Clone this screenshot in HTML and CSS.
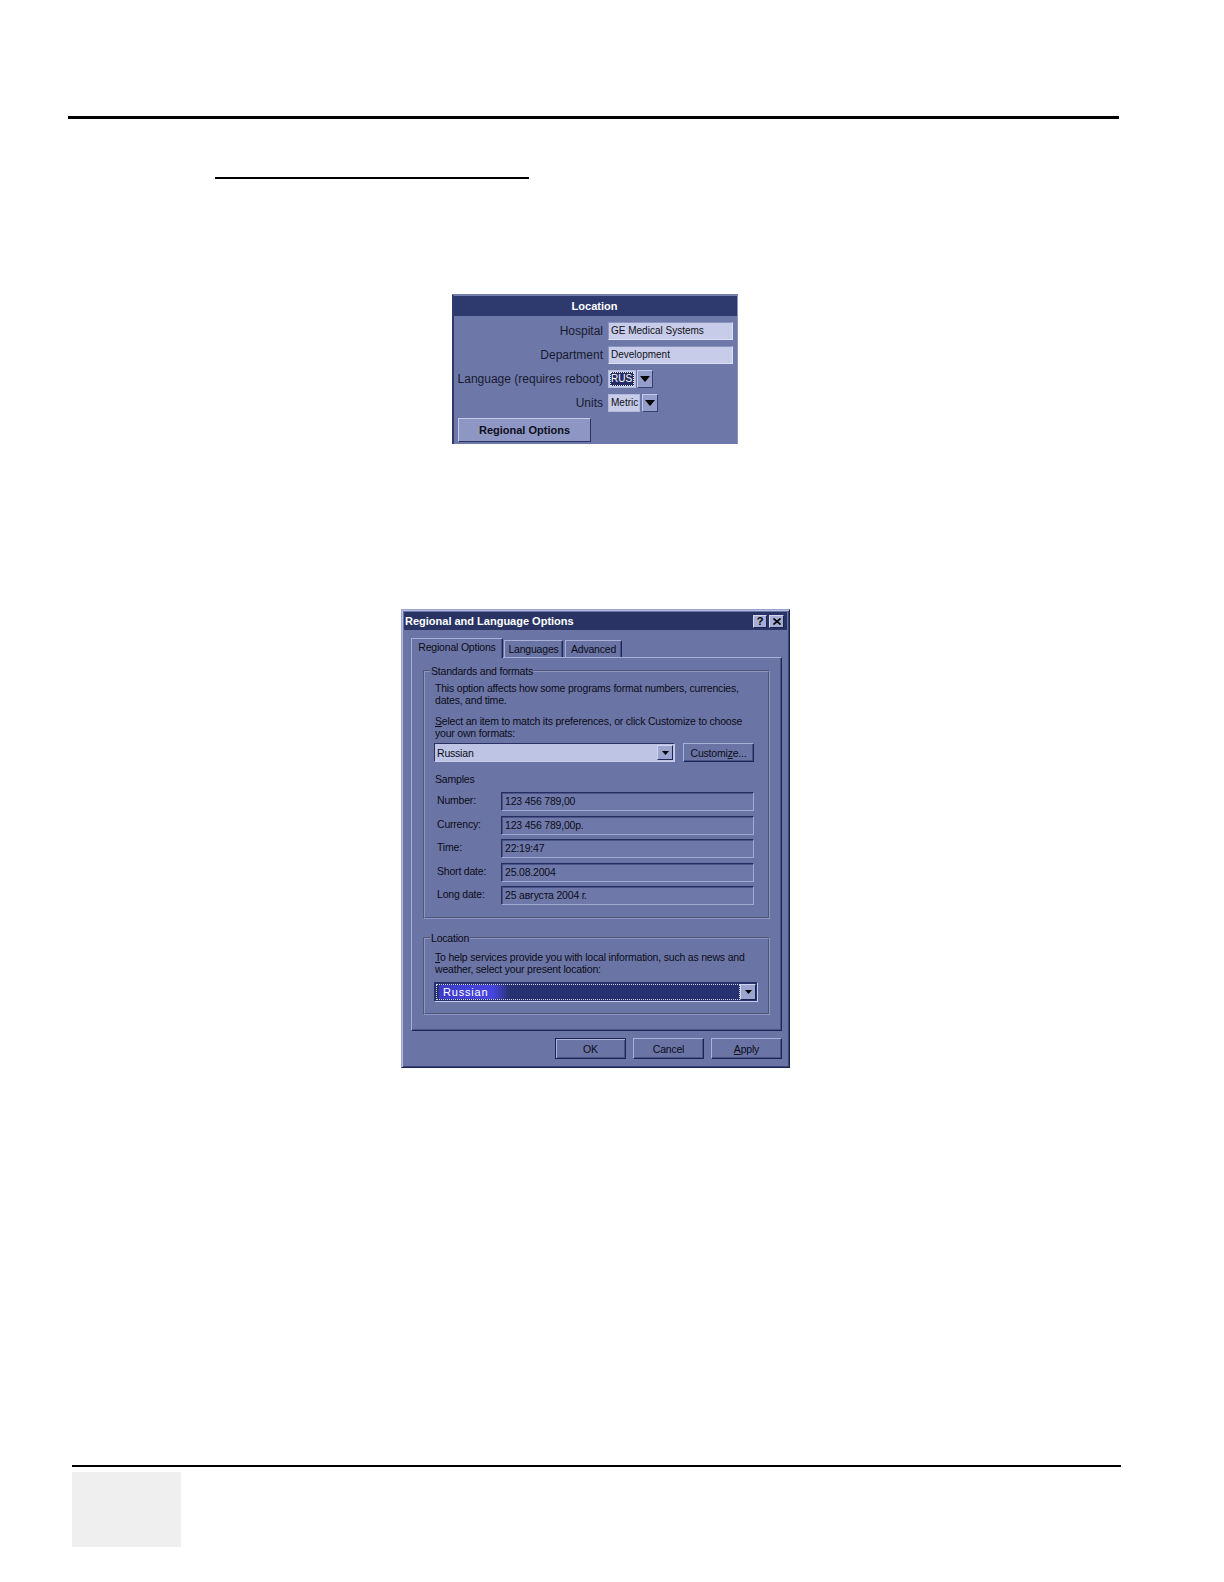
FILE: index.html
```html
<!DOCTYPE html>
<html>
<head>
<meta charset="utf-8">
<title>Regional and Language Options</title>
<link rel="stylesheet" href="styles.css">
</head>
<body>
<div class="page">
  <div class="rule-top"></div>
  <div class="rule-sub"></div>

  <div class="loc">
    <div class="loc-title">Location</div>
    <div class="loc-body">
      <span class="lbl">Hospital</span>
      <div class="field">GE Medical Systems</div>
      <span class="lbl">Department</span>
      <div class="field">Development</div>
      <span class="lbl">Language (requires reboot)</span>
      <div class="combo combo-rus">
        <div class="cbox cbox-rus"><span class="hl">RUS</span></div>
        <div class="arrow"><svg width="10" height="6" viewBox="0 0 10 6"><polygon points="0,0 10,0 5,6" fill="#000"/></svg></div>
      </div>
      <span class="lbl">Units</span>
      <div class="combo">
        <div class="cbox cbox-metric">Metric</div>
        <div class="arrow"><svg width="10" height="6" viewBox="0 0 10 6"><polygon points="0,0 10,0 5,6" fill="#000"/></svg></div>
      </div>
      <div class="btn-regional">Regional Options</div>
    </div>
  </div>

  <div class="dlg">
    <div class="dlg-title">
      <span class="dlg-title-text">Regional and Language Options</span>
      <div class="tb-btns">
        <span class="tb-btn tb-help">?</span>
        <span class="tb-btn tb-close"><svg width="8" height="7" viewBox="0 0 8 7"><path d="M0.5 0.5 L7.5 6.5 M7.5 0.5 L0.5 6.5" stroke="#000" stroke-width="1.6"/></svg></span>
      </div>
    </div>
    <div class="tabs">
      <div class="tab tab-active">Regional Options</div>
      <div class="tab tab-lang">Languages</div>
      <div class="tab tab-adv">Advanced</div>
    </div>
    <div class="tab-panel">
      <fieldset class="grp grp-std">
        <legend>Standards and formats</legend>
        <p class="txt txt-first">This option affects how some programs format numbers, currencies,<br>dates, and time.</p>
        <p class="txt txt-sel"><u>S</u>elect an item to match its preferences, or click Customize to choose<br>your own formats:</p>
        <div class="fmt-row">
          <div class="wcombo"><span class="wcombo-text">Russian</span><span class="warrow"><svg width="7" height="4" viewBox="0 0 7 4"><polygon points="0,0 7,0 3.5,4" fill="#000"/></svg></span></div>
          <div class="wbtn btn-cust">Customi<u>z</u>e...</div>
        </div>
        <p class="txt samples">Samples</p>
        <div class="samples-grid">
          <span class="s-lbl">Number:</span><div class="s-field">123 456 789,00</div>
          <span class="s-lbl">Currency:</span><div class="s-field">123 456 789,00р.</div>
          <span class="s-lbl">Time:</span><div class="s-field">22:19:47</div>
          <span class="s-lbl">Short date:</span><div class="s-field">25.08.2004</div>
          <span class="s-lbl">Long date:</span><div class="s-field">25 августа 2004 г.</div>
        </div>
      </fieldset>
      <fieldset class="grp grp-loc">
        <legend>Location</legend>
        <p class="txt txt-loc"><u>T</u>o help services provide you with local information, such as news and<br>weather, select your present location:</p>
        <div class="lcombo">
          <div class="lcombo-box"><span class="lcombo-text">Russian</span></div>
          <span class="warrow warrow-l"><svg width="7" height="4" viewBox="0 0 7 4"><polygon points="0,0 7,0 3.5,4" fill="#000"/></svg></span>
        </div>
      </fieldset>
    </div>
    <div class="dlg-btns">
      <div class="wbtn btn-default">OK</div>
      <div class="wbtn">Cancel</div>
      <div class="wbtn"><u>A</u>pply</div>
    </div>
  </div>

  <div class="rule-bottom"></div>
  <div class="foot-box"></div>
</div>
</body>
</html>
```
FILE: styles.css
```css
html, body {
  margin: 0;
  background: #ffffff;
}
body {
  font-family: "Liberation Sans", Arial, sans-serif;
  color: #0c0c18;
}
.page {
  padding-top: 116px;
  width: 1224px;
  min-height: 1582px;
  box-sizing: border-box;
}
.rule-top {
  margin-left: 68px;
  width: 1051px;
  height: 3px;
  background: #000;
}
.rule-sub {
  margin: 58px 0 0 215px;
  width: 314px;
  height: 2px;
  background: #000;
}

/* ---------- Location panel ---------- */
.loc {
  margin: 115px 0 0 452px;
  width: 286px;
  height: 150px;
  box-sizing: border-box;
  background: #6e78a8;
  border-top: 2px solid #7680b0;
  border-left: 2px solid #2e3a6e;
  border-right: 1px solid #8c94c4;
}
.loc-title {
  height: 20px;
  margin-left: -2px;
  background: #2e3a6e;
  color: #fff;
  font-weight: bold;
  font-size: 11px;
  line-height: 21px;
  text-align: center;
}
.loc-body {
  display: grid;
  grid-template-columns: 145px 125px;
  grid-template-rows: 18px 18px 18px 18px 24px;
  column-gap: 5px;
  row-gap: 6px;
  padding: 6px 0 0 4px;
}
.lbl {
  display: flex;
  justify-content: flex-end;
  font-size: 12px;
  line-height: 18px;
  color: #171a30;
  white-space: nowrap;
}
.field {
  box-sizing: border-box;
  background: #c7cce8;
  border: 1px solid;
  border-color: #8a92c0 #dde0f2 #dde0f2 #8a92c0;
  font-size: 10px;
  line-height: 16px;
  padding-left: 2px;
  color: #101018;
  white-space: nowrap;
}
.combo {
  display: flex;
  gap: 2px;
}
.combo-rus {
  gap: 1px;
}
.cbox {
  box-sizing: border-box;
  height: 18px;
  background: #c7cce8;
  border: 1px solid #b4bade;
  font-size: 10px;
  line-height: 16px;
  color: #101018;
}
.cbox-rus {
  width: 28px;
  padding: 1px;
}
.hl {
  display: block;
  height: 14px;
  background: #232c66;
  color: #fff;
  outline: 1px dotted #e4e6f4;
  outline-offset: -1px;
  line-height: 14px;
  padding-left: 1px;
  font-size: 10px;
  white-space: nowrap;
  overflow: hidden;
}
.cbox-metric {
  width: 32px;
  padding-left: 2px;
}
.arrow {
  width: 16px;
  height: 18px;
  box-sizing: border-box;
  background: #959dca;
  border: 1px solid;
  border-color: #c4c9e8 #39416f #39416f #c4c9e8;
  display: flex;
  align-items: center;
  justify-content: center;
}
.btn-regional {
  grid-column: 1 / 3;
  width: 133px;
  height: 24px;
  box-sizing: border-box;
  background: #8e96c3;
  border: 1px solid;
  border-color: #c6cbe8 #2a3264 #2a3264 #c6cbe8;
  font-weight: bold;
  font-size: 11px;
  color: #101020;
  display: flex;
  align-items: center;
  justify-content: center;
}

/* ---------- Windows dialog ---------- */
.dlg {
  margin: 165px 0 0 401px;
  width: 389px;
  height: 459px;
  box-sizing: border-box;
  background: #6b75a5;
  border: 1px solid;
  border-color: #9aa2d0 #1c2450 #1c2450 #9aa2d0;
  box-shadow: inset 1px 1px 0 #b8bee2, inset -1px -1px 0 #3a4478;
  padding: 2px;
  font-size: 10.5px;
  letter-spacing: -0.2px;
}
.dlg-title {
  height: 18px;
  background: #2a3464;
  display: flex;
  align-items: center;
  justify-content: space-between;
  padding: 0 3px 0 1px;
}
.dlg-title-text {
  color: #fff;
  font-weight: bold;
  font-size: 11px;
  letter-spacing: 0;
  white-space: nowrap;
}
.tb-btns {
  display: flex;
  gap: 2px;
}
.tb-btn {
  box-sizing: border-box;
  height: 13px;
  background: #a6aed6;
  border: 1px solid;
  border-color: #d4d8ee #1c2450 #1c2450 #d4d8ee;
  display: flex;
  align-items: center;
  justify-content: center;
  color: #000;
}
.tb-help {
  width: 14px;
  font-weight: bold;
  font-size: 11px;
  line-height: 11px;
}
.tb-close {
  width: 15px;
}
.tabs {
  display: flex;
  align-items: flex-end;
  height: 27px;
  padding-left: 7px;
  box-sizing: border-box;
}
.tab {
  height: 17px;
  box-sizing: border-box;
  border: 1px solid;
  border-bottom: none;
  border-color: #a8b0da #1e2654 transparent #a8b0da;
  box-shadow: inset -1px 0 0 #4a5488;
  display: flex;
  align-items: center;
  justify-content: center;
  white-space: nowrap;
  color: #0c0c18;
}
.tab-active {
  width: 92px;
  height: 20px;
  margin-bottom: -1px;
  position: relative;
  z-index: 1;
  background: #6b75a5;
  padding-bottom: 3px;
}
.tab-lang {
  width: 59px;
  margin-left: 1px;
}
.tab-adv {
  width: 57px;
  margin-left: 2px;
}
.tab-panel {
  margin-left: 7px;
  width: 371px;
  height: 374px;
  box-sizing: border-box;
  border: 1px solid;
  border-color: #a8b0da #1e2654 #1e2654 #a8b0da;
  box-shadow: inset -1px -1px 0 #4a5488;
  padding: 7px 0 0 11px;
}
.grp {
  margin: 0;
  width: 347px;
  box-sizing: border-box;
  border: 2px groove #8e96c6;
  padding: 0 0 11px 10px;
  min-inline-size: 0;
}
.grp-std {
  padding-bottom: 12px;
}
.grp legend {
  padding: 0 1px;
  margin-left: -5px;
  line-height: 12px;
  color: #0c0c18;
}
.txt {
  margin: 0;
  line-height: 12px;
  white-space: nowrap;
}
.txt-first {
  margin-top: 5px;
}
.txt-sel {
  margin-top: 9px;
}
.fmt-row {
  display: flex;
  gap: 8px;
  margin: 4px 0 0 -1px;
}
.wcombo {
  width: 241px;
  height: 19px;
  box-sizing: border-box;
  background: #bec4e4;
  border: 1px solid;
  border-color: #2a3264 #c8cce8 #c8cce8 #2a3264;
  display: flex;
  align-items: center;
  justify-content: space-between;
  padding: 0 1px 0 2px;
}
.wcombo-text {
  color: #0c0c18;
}
.warrow {
  width: 16px;
  height: 15px;
  box-sizing: border-box;
  background: #9ca4d0;
  border: 1px solid;
  border-color: #d0d4ec #1e2654 #1e2654 #d0d4ec;
  display: flex;
  align-items: center;
  justify-content: center;
}
.wbtn {
  width: 71px;
  height: 21px;
  box-sizing: border-box;
  border: 1px solid;
  border-color: #aab2dc #1c2450 #1c2450 #aab2dc;
  box-shadow: inset -1px -1px 0 #4a5488;
  display: flex;
  align-items: center;
  justify-content: center;
  color: #0c0c18;
}
.btn-cust {
  height: 19px;
}
.samples {
  margin-top: 12px;
  line-height: 11px;
}
.samples-grid {
  display: grid;
  grid-template-columns: 66px 253px;
  grid-auto-rows: 19px;
  row-gap: 4.5px;
  margin-top: 7px;
}
.s-lbl {
  padding-left: 2px;
  line-height: 16px;
  white-space: nowrap;
}
.s-field {
  box-sizing: border-box;
  background: #6f79a9;
  border: 1px solid;
  border-color: #262e60 #a2aad4 #a2aad4 #262e60;
  box-shadow: inset 1px 1px 0 #4a5488;
  padding-left: 3px;
  line-height: 17px;
  white-space: nowrap;
}
.grp-loc {
  margin-top: 13px;
}
.txt-loc {
  margin-top: 7px;
}
.lcombo {
  margin: 7px 0 0 -1px;
  width: 324px;
  height: 20px;
  box-sizing: border-box;
  border: 1px solid;
  border-color: #2a3264 #c8cce8 #c8cce8 #2a3264;
  background: #283170;
  display: flex;
  align-items: center;
  padding: 1px;
}
.lcombo-box {
  flex: 1;
  height: 16px;
  box-sizing: border-box;
  outline: 1px dotted #d0d4ee;
  outline-offset: -1px;
  display: flex;
  align-items: center;
  padding-left: 3px;
}
.lcombo-text {
  color: #fff;
  font-size: 11px;
  letter-spacing: 0.8px;
  line-height: 14px;
  padding: 0 22px 0 4px;
  border-radius: 0 7px 7px 0;
  background: linear-gradient(90deg, #3c3cc8 0%, #4646e0 75%, rgba(70, 70, 224, 0) 100%);
}
.warrow-l {
  height: 16px;
}
.dlg-btns {
  display: flex;
  justify-content: flex-end;
  gap: 7px;
  margin-top: 7px;
  padding-right: 5px;
}
.btn-default {
  border-color: #1c2450;
  box-shadow: inset 1px 1px 0 #aab2dc, inset -1px -1px 0 #4a5488;
}

/* ---------- footer ---------- */
.rule-bottom {
  margin: 397px 0 0 72px;
  width: 1049px;
  height: 2px;
  background: #000;
}
.foot-box {
  margin: 5px 0 0 72px;
  width: 109px;
  height: 75px;
  background: #efefef;
}
```
